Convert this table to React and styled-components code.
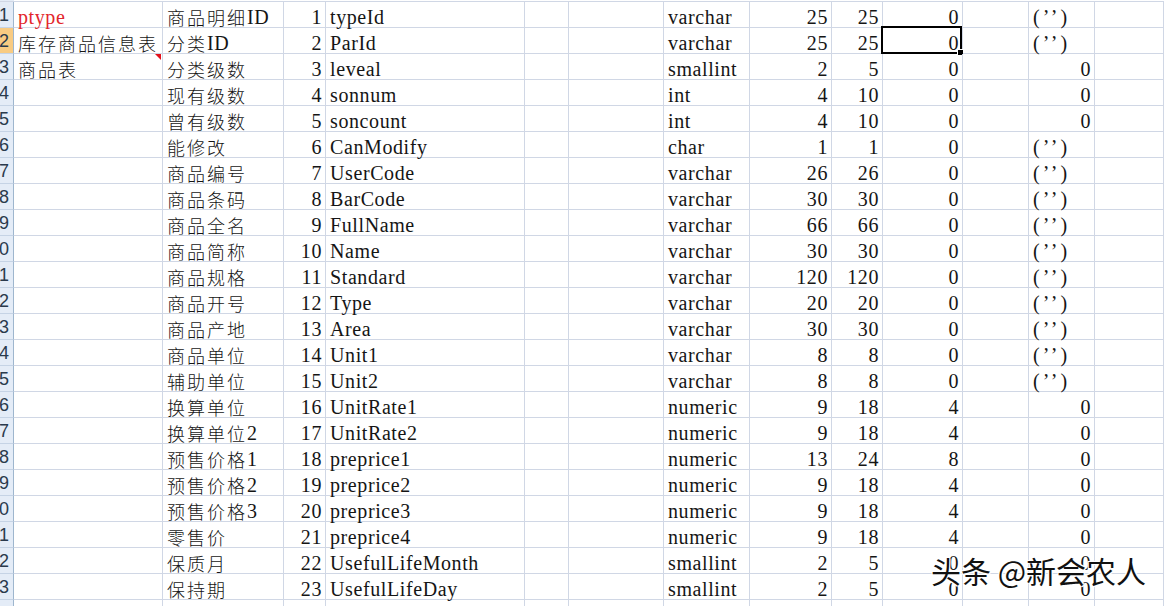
import React from "react";
import styled, { createGlobalStyle } from "styled-components";

const GlobalStyle = createGlobalStyle`
  html, body {
    margin: 0;
    padding: 0;
    background: #fff;
    overflow: hidden;
  }
  body {
    font-family: "Liberation Serif", "Noto Sans CJK SC", serif;
  }
`;

/* column widths taken from the gridlines (each cell owns its right border) */
const COLS = "14px 149px 121px 42px 199px 44px 95px 86px 82px 51px 80px 66px 66px 1fr";
const GRID = "#d0d7e5";

const Page = styled.div`
  position: relative;
  width: 1164px;
  height: 606px;
  overflow: hidden;
  padding-top: 1px;
  box-sizing: border-box;
  background: linear-gradient(to right, #e4ecf7 14px, #fff 14px);
`;

const Sheet = styled.div`
  display: grid;
  grid-template-columns: ${COLS};
  grid-auto-rows: 26px;
  border-top: 1px solid ${GRID};
  background: #fff;
`;

const RowHead = styled.div`
  box-sizing: border-box;
  display: flex;
  align-items: center;
  justify-content: flex-end;
  padding: 2px 4px 0 0;
  overflow: hidden;
  border-right: 1px solid #9eb6ce;
  border-bottom: 1px solid #c5d3e5;
  background: ${(p) => (p.$active ? "#f8cb82" : "#e4ecf7")};
  font-family: "Liberation Sans", "Noto Sans", sans-serif;
  font-size: 18px;
  color: #2a3a4c;
  white-space: nowrap;
`;

const Cell = styled.div`
  position: relative;
  box-sizing: border-box;
  display: flex;
  align-items: flex-end;
  justify-content: ${(p) => (p.$right ? "flex-end" : "flex-start")};
  padding: 0 3px 0 4px;
  border-right: 1px solid ${GRID};
  border-bottom: 1px solid ${GRID};
  white-space: nowrap;
  font-size: 20px;
  line-height: 20px;
  letter-spacing: 0.6px;
  color: ${(p) => (p.$red ? "#e3262c" : "#151515")};
`;

const Han = styled.span`
  font-family: "Noto Sans CJK SC", sans-serif;
  font-size: 18px;
  font-weight: 300;
  letter-spacing: 2px;
`;

/* the empty-string default "('')" is drawn with wide quote spacing */
const Quote = styled.span`
  letter-spacing: 3px;
`;

const Selection = styled.div`
  position: absolute;
  left: -2px;
  top: -2px;
  right: 0;
  bottom: -1px;
  border: 2px solid #000;
  pointer-events: none;

  &::after {
    content: "";
    position: absolute;
    right: -4px;
    bottom: -4px;
    width: 5px;
    height: 5px;
    background: #000;
    border: 1px solid #fff;
  }
`;

const CommentMark = styled.div`
  position: absolute;
  top: 0;
  right: 1px;
  width: 0;
  height: 0;
  border-top: 6px solid #e3101a;
  border-left: 6px solid transparent;
`;

const Watermark = styled.div`
  position: absolute;
  left: 931px;
  top: 548px;
  font-family: "Noto Sans CJK SC", sans-serif;
  font-size: 30px;
  color: #111;
  white-space: nowrap;
  text-shadow: 1px 1px 0 #fff, -1px -1px 0 #fff, 1px -1px 0 #fff,
    -1px 1px 0 #fff, 0 0 3px #fff;
`;

const HAN_RE = /([\u2e80-\u9fff\uff00-\uffef]+)/;

const Text = ({ value }) =>
  String(value)
    .split(HAN_RE)
    .map((part, i) => (i % 2 ? <Han key={i}>{part}</Han> : part));

const Q = "(\u2019\u2019)";

// A, B, C, D, G, H, I, J, L
const rows = [
  ["ptype", "商品明细ID", 1, "typeId", "varchar", 25, 25, 0, Q],
  ["库存商品信息表", "分类ID", 2, "ParId", "varchar", 25, 25, 0, Q],
  ["商品表", "分类级数", 3, "leveal", "smallint", 2, 5, 0, 0],
  ["", "现有级数", 4, "sonnum", "int", 4, 10, 0, 0],
  ["", "曾有级数", 5, "soncount", "int", 4, 10, 0, 0],
  ["", "能修改", 6, "CanModify", "char", 1, 1, 0, Q],
  ["", "商品编号", 7, "UserCode", "varchar", 26, 26, 0, Q],
  ["", "商品条码", 8, "BarCode", "varchar", 30, 30, 0, Q],
  ["", "商品全名", 9, "FullName", "varchar", 66, 66, 0, Q],
  ["", "商品简称", 10, "Name", "varchar", 30, 30, 0, Q],
  ["", "商品规格", 11, "Standard", "varchar", 120, 120, 0, Q],
  ["", "商品开号", 12, "Type", "varchar", 20, 20, 0, Q],
  ["", "商品产地", 13, "Area", "varchar", 30, 30, 0, Q],
  ["", "商品单位", 14, "Unit1", "varchar", 8, 8, 0, Q],
  ["", "辅助单位", 15, "Unit2", "varchar", 8, 8, 0, Q],
  ["", "换算单位", 16, "UnitRate1", "numeric", 9, 18, 4, 0],
  ["", "换算单位2", 17, "UnitRate2", "numeric", 9, 18, 4, 0],
  ["", "预售价格1", 18, "preprice1", "numeric", 13, 24, 8, 0],
  ["", "预售价格2", 19, "preprice2", "numeric", 9, 18, 4, 0],
  ["", "预售价格3", 20, "preprice3", "numeric", 9, 18, 4, 0],
  ["", "零售价", 21, "preprice4", "numeric", 9, 18, 4, 0],
  ["", "保质月", 22, "UsefulLifeMonth", "smallint", 2, 5, 0, 0],
  ["", "保持期", 23, "UsefulLifeDay", "smallint", 2, 5, 0, 0],
  ["", "备注", 24, "Comment", "varchar", 256, 256, 0, Q],
];

const Row = ({ data, index }) => {
  const [a, b, c, d, g, h, i, j, l] = data;
  const n = index + 1;
  const numeric = typeof l === "number";
  return (
    <>
      <RowHead $active={n === 2}>{n}</RowHead>
      <Cell $red={n === 1}>
        <Text value={a} />
        {n === 3 && <CommentMark />}
      </Cell>
      <Cell>
        <Text value={b} />
      </Cell>
      <Cell $right>{c}</Cell>
      <Cell>{d}</Cell>
      <Cell />
      <Cell />
      <Cell>{g}</Cell>
      <Cell $right>{h}</Cell>
      <Cell $right>{i}</Cell>
      <Cell $right>
        {j}
        {n === 2 && <Selection />}
      </Cell>
      <Cell />
      <Cell $right={numeric}>{numeric ? l : <Quote>{l}</Quote>}</Cell>
      <Cell />
    </>
  );
};

export default function App() {
  return (
    <>
      <GlobalStyle />
      <Page>
        <Sheet>
          {rows.map((r, idx) => (
            <Row key={idx} data={r} index={idx} />
          ))}
        </Sheet>
        <Watermark>头条 @新会农人</Watermark>
      </Page>
    </>
  );
}
